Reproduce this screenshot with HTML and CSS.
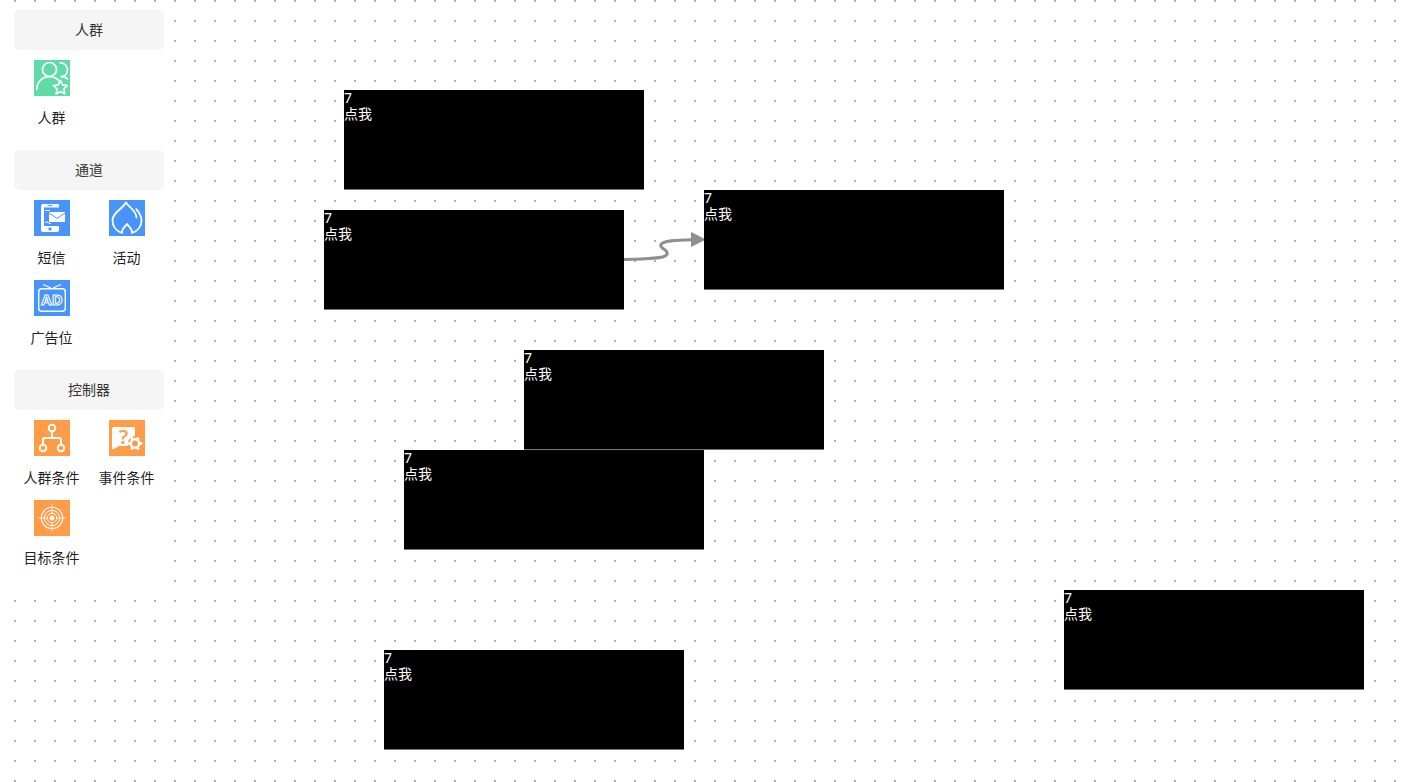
FILE: index.html
```html
<!DOCTYPE html>
<html lang="zh-CN">
<head>
<meta charset="utf-8">
<title>流程画布</title>
<link rel="stylesheet" href="styles.css">
</head>
<body>
<main class="canvas">
  <aside class="palette">
    <section class="group">
      <h2 class="group-title">人群</h2>
      <div class="items">
        <button class="item" type="button">
          <svg class="icon green" viewBox="0 0 36 36" fill="none" stroke="#fff" stroke-width="1.7" stroke-linecap="round" stroke-linejoin="round">
            <circle cx="15.500" cy="9.500" r="7"/>
            <path d="M2.800 29.500C3 21.500 8.500 16.700 15.500 16.700c4.200 0 7.600 1.700 10 4.800M26.200 2.700c4.400.3 7.300 3.500 7.300 7 0 3.900-2.700 6.700-6.500 7M27.500 16.700c2.700.1 4.300.7 6 2"/>
            <path d="M26.500 20.500l2.100 4.300 4.800.7-3.500 3.400.8 4.800-4.200-2.200-4.300 2.200.8-4.800-3.500-3.400 4.800-.7z"/>
          </svg>
          <span class="label">人群</span>
        </button>
      </div>
    </section>
    <section class="group">
      <h2 class="group-title">通道</h2>
      <div class="items">
        <button class="item" type="button">
          <svg class="icon blue" viewBox="0 0 36 36">
            <path fill="#fff" d="M9 4h16v3.500H10V26h15v4q0 2-2 2H9q-2 0-2-2V6q0-2 2-2z"/>
            <path stroke="#4894fa" d="M13.500 5.600h5"/>
            <rect x="14.500" y="27.500" width="3" height="3" rx="1" fill="#4894fa"/>
            <path stroke="#fff" fill="none" d="M11 10.500h5M11 22.200h3l1 1.300h2"/>
            <rect x="15" y="12" width="16" height="10" fill="#fff"/>
            <path fill="none" stroke="#4894fa" d="M15 13l8 5.500 8-5.500"/>
          </svg>
          <span class="label">短信</span>
        </button>
        <button class="item" type="button">
          <svg class="icon blue" viewBox="0 0 36 36" fill="none" stroke="#fff" stroke-width="1.800" stroke-linecap="round" stroke-linejoin="round">
            <path d="M13 33C7 31 3.500 26 3.500 20.500c0-8 9-10.500 13.500-18 2 4.500 10 7 10.500 15M27.200 9.200c3.700 4 5.300 7.200 5.300 11.300 0 5.500-3.500 10.500-9.500 12.500.2-5.500-3.500-6.500-5-9-1.500 2.500-5.200 3.500-5 9"/>
          </svg>
          <span class="label">活动</span>
        </button>
        <button class="item" type="button">
          <svg class="icon blue" viewBox="0 0 36 36" fill="none" stroke="#fff">
            <rect x="4.700" y="8.700" width="26.600" height="22.600" rx="3" stroke-width="1.400"/>
            <path stroke-width="1.300" d="M9 4.500l8 3.500M27 4.500L19 8"/>
            <text class="ad" x="18" y="25" text-anchor="middle">AD</text>
          </svg>
          <span class="label">广告位</span>
        </button>
      </div>
    </section>
    <section class="group">
      <h2 class="group-title">控制器</h2>
      <div class="items">
        <button class="item" type="button">
          <svg class="icon orange" viewBox="0 0 36 36" fill="none" stroke="#fff" stroke-width="1.900">
            <circle cx="18" cy="8" r="3.300"/><circle cx="9" cy="28" r="3.300"/><circle cx="27" cy="28" r="3.300"/>
            <path d="M18 11.300V18M9 24.700V19.500q0-1.500 1.500-1.500h15q1.500 0 1.500 1.500v5.200"/>
          </svg>
          <span class="label">人群条件</span>
        </button>
        <button class="item" type="button">
          <svg class="icon orange" viewBox="0 0 36 36">
            <path fill="#fff" d="M4.500 7h20q1.500 0 1.500 1.500V24l-4 2H10l-5 3q-2 1-2-1V8.500Q3 7 4.500 7z"/>
            <text class="question" x="14.500" y="24" text-anchor="middle">?</text>
            <circle cx="26" cy="23.500" r="7.200" fill="#ff9c49"/>
            <g fill="#fff">
              <circle cx="26" cy="23.500" r="5.400"/>
              <circle cx="32" cy="23.500" r="1.500"/><circle cx="29" cy="28.500" r="1.500"/><circle cx="23" cy="28.500" r="1.500"/>
              <circle cx="20" cy="23.500" r="1.500"/><circle cx="23" cy="18.500" r="1.500"/><circle cx="29" cy="18.500" r="1.500"/>
            </g>
            <circle cx="26" cy="23.500" r="3" fill="#ff9c49"/>
          </svg>
          <span class="label">事件条件</span>
        </button>
        <button class="item" type="button">
          <svg class="icon orange" viewBox="0 0 36 36" fill="none" stroke="#fff">
            <circle cx="18" cy="18" r="10.700" stroke-width="1.100"/><circle cx="18" cy="18" r="7.700" stroke-width="1"/><circle cx="18" cy="18" r="4.800" stroke-width="1"/>
            <circle cx="18" cy="18" r="2.500" fill="#fff" stroke="none"/>
            <path stroke-width=".7" d="M18 4.500v9M18 22.500v9M4.500 18h9M22.500 18h9"/>
          </svg>
          <span class="label">目标条件</span>
        </button>
      </div>
    </section>
  </aside>
  <svg class="edge" viewBox="0 0 82 40" fill="none">
    <path d="M0 29.500C24 29 41 28.500 43 24.500C45 19 35 19 37 14.500C39 10.500 52 10 68 9.700" stroke="#8f8f8f" stroke-width="3"/>
    <path d="M67 2l15 7.500-15 7.500z" fill="#8f8f8f"/>
  </svg>
  <div class="node n1"><span>7</span><span>点我</span></div>
  <div class="node n2"><span>7</span><span>点我</span></div>
  <div class="node n3"><span>7</span><span>点我</span></div>
  <div class="node n4"><span>7</span><span>点我</span></div>
  <div class="node n5"><span>7</span><span>点我</span></div>
  <div class="node n6"><span>7</span><span>点我</span></div>
  <div class="node n7"><span>7</span><span>点我</span></div>
</main>
</body>
</html>
```
FILE: styles.css
```css
* {
  box-sizing: border-box;
}

body {
  margin: 0;
  font-family: "Noto Sans", "Noto Sans CJK SC", sans-serif;
  font-size: 14px;
  color: #1f1f28;
}

.canvas {
  position: relative;
  min-height: 100vh;
  overflow: hidden;
  padding: 10px 14px;
  background-color: #fff;
  background-image: conic-gradient(from 270deg at 2px 2px, #b0b0b0 90deg, transparent 0);
  background-size: 20px 20px;
  background-position: 14px 0;
}

.palette {
  width: 150px;
  background: #fff;
}

.group-title {
  margin: 0;
  font-size: 14px;
  font-weight: 400;
  line-height: 40px;
  text-align: center;
  color: #333;
  background: #f5f5f5;
  border-radius: 5px;
}

.items {
  display: grid;
  grid-template-columns: 1fr 1fr;
  padding: 10px 0;
}

.item {
  display: flex;
  flex-direction: column;
  align-items: center;
  gap: 12px;
  height: 80px;
  padding: 0;
  border: 0;
  background: none;
  font: inherit;
  color: inherit;
  cursor: grab;
}

.label {
  line-height: 20px;
  white-space: nowrap;
}

.icon {
  display: block;
  width: 36px;
  height: 36px;
}

.green { background: #5fdba7; }
.blue { background: #4894fa; }
.orange { background: #ff9c49; }

.ad {
  font: 700 15px "Noto Sans", sans-serif;
  stroke-width: 1px;
}

.question {
  font: 600 20px "Noto Sans", sans-serif;
  fill: #ff9c49;
}

.node {
  position: absolute;
  display: flex;
  flex-direction: column;
  width: 300px;
  height: 100px;
  line-height: 16px;
  color: #fff;
  background: #000;
  border-bottom: 1px solid #777;
}

.n1 { left: 344px; top: 90px; }
.n2 { left: 324px; top: 210px; }
.n3 { left: 704px; top: 190px; }
.n4 { left: 524px; top: 350px; }
.n5 { left: 404px; top: 450px; }
.n6 { left: 1064px; top: 590px; }
.n7 { left: 384px; top: 650px; }

.edge {
  position: absolute;
  left: 624px;
  top: 230px;
  width: 82px;
  height: 40px;
}
```
